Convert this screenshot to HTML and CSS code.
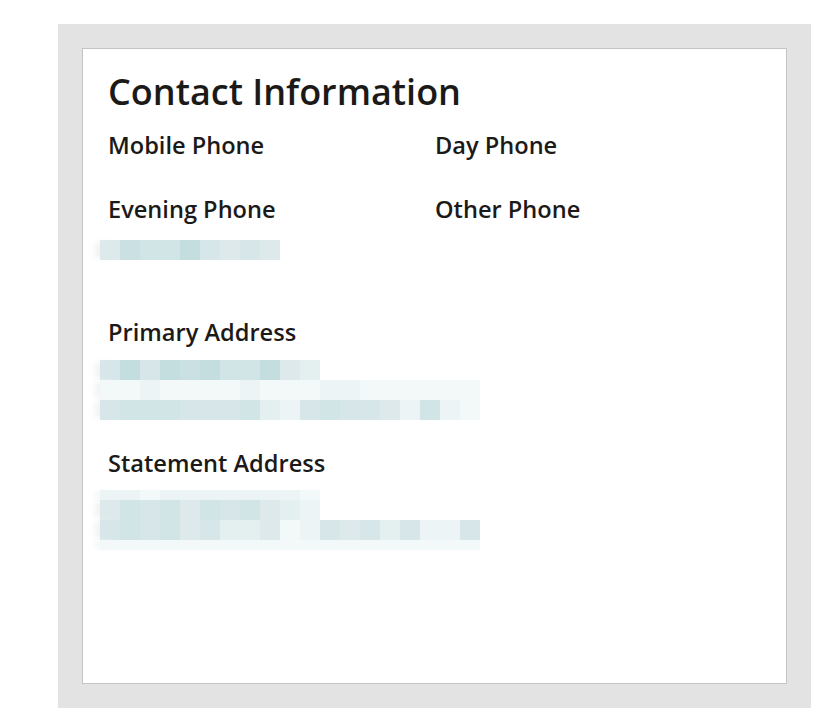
FILE: index.html
```html
<!DOCTYPE html>
<html lang="en">
<head>
    <meta charset="UTF-8">
    <meta name="viewport" content="width=device-width, initial-scale=1.0">
    <title>Contact Information</title>
    <link rel="stylesheet" href="styles.css">
</head>
<body>
    <div class="panel">
        <div class="card">
            <h2 class="card-title">Contact Information</h2>

            <div class="phone-grid">
                <div class="field">
                    <div class="field-label">Mobile Phone</div>
                </div>
                <div class="field">
                    <div class="field-label">Day Phone</div>
                </div>
                <div class="field">
                    <div class="field-label">Evening Phone</div>
                    <div class="blurred blurred-phone">
                        <div class="px-row">
                            <span class="px t5"></span><span class="px t2"></span><span class="px t3"></span><span class="px t3"></span><span class="px t1"></span><span class="px t4"></span><span class="px t5"></span><span class="px t4"></span><span class="px t5"></span>
                        </div>
                    </div>
                </div>
                <div class="field">
                    <div class="field-label">Other Phone</div>
                </div>
            </div>

            <div class="field address primary">
                <div class="field-label">Primary Address</div>
                <div class="blurred blurred-primary">
                    <div class="px-row">
                        <span class="px t4"></span><span class="px t1"></span><span class="px t4"></span><span class="px t1"></span><span class="px t2"></span><span class="px t1"></span><span class="px t3"></span><span class="px t3"></span><span class="px t1"></span><span class="px t5"></span><span class="px t6"></span>
                    </div>
                    <div class="px-row">
                        <span class="px t8"></span><span class="px t8"></span><span class="px t7"></span><span class="px t8"></span><span class="px t8"></span><span class="px t8"></span><span class="px t8"></span><span class="px t7"></span><span class="px t8"></span><span class="px t8"></span><span class="px t8"></span><span class="px t7"></span><span class="px t7"></span><span class="px t8"></span><span class="px t8"></span><span class="px t8"></span><span class="px t8"></span><span class="px t8"></span><span class="px t8"></span>
                    </div>
                    <div class="px-row">
                        <span class="px t4"></span><span class="px t3"></span><span class="px t3"></span><span class="px t3"></span><span class="px t4"></span><span class="px t4"></span><span class="px t4"></span><span class="px t3"></span><span class="px t6"></span><span class="px t7"></span><span class="px t4"></span><span class="px t3"></span><span class="px t4"></span><span class="px t4"></span><span class="px t5"></span><span class="px t7"></span><span class="px t3"></span><span class="px t7"></span><span class="px t8"></span>
                    </div>
                </div>
            </div>

            <div class="field address statement">
                <div class="field-label">Statement Address</div>
                <div class="blurred blurred-statement">
                    <div class="px-row half">
                        <span class="px t7"></span><span class="px t7"></span><span class="px t8"></span><span class="px t7"></span><span class="px t7"></span><span class="px t7"></span><span class="px t7"></span><span class="px t7"></span><span class="px t7"></span><span class="px t7"></span><span class="px t8"></span>
                    </div>
                    <div class="px-row">
                        <span class="px t5"></span><span class="px t3"></span><span class="px t4"></span><span class="px t3"></span><span class="px t5"></span><span class="px t3"></span><span class="px t4"></span><span class="px t3"></span><span class="px t5"></span><span class="px t6"></span><span class="px t7"></span>
                    </div>
                    <div class="px-row">
                        <span class="px t4"></span><span class="px t3"></span><span class="px t4"></span><span class="px t3"></span><span class="px t5"></span><span class="px t4"></span><span class="px t6"></span><span class="px t6"></span><span class="px t5"></span><span class="px t8"></span><span class="px t7"></span><span class="px t4"></span><span class="px t5"></span><span class="px t4"></span><span class="px t6"></span><span class="px t4"></span><span class="px t7"></span><span class="px t7"></span><span class="px t4"></span>
                    </div>
                    <div class="px-row half">
                        <span class="px t8"></span><span class="px t8"></span><span class="px t8"></span><span class="px t8"></span><span class="px t8"></span><span class="px t8"></span><span class="px t8"></span><span class="px t8"></span><span class="px t8"></span><span class="px t8"></span><span class="px t8"></span><span class="px t8"></span><span class="px t8"></span><span class="px t8"></span><span class="px t8"></span><span class="px t8"></span><span class="px t8"></span><span class="px t8"></span><span class="px t8"></span>
                    </div>
                </div>
            </div>
        </div>
    </div>
</body>
</html>
```

FILE: styles.css
```css
body {
    margin: 0;
    padding: 24px 20px 15px 58px;
    background-color: #fff;
    font-family: "Open Sans", "Liberation Sans", sans-serif;
    color: #1c1a18;
}
.panel {
    width: 753px;
    height: 684px;
    box-sizing: border-box;
    padding: 24px;
    background-color: #e3e3e3;
}
.card {
    height: 100%;
    box-sizing: border-box;
    padding: 21px 25px;
    background-color: #fff;
    border: 1px solid #c4c4c4;
}
.card-title {
    margin: 0 0 16px;
    font-size: 36px;
    font-weight: 600;
    line-height: 44px;
}
.phone-grid {
    display: grid;
    grid-template-columns: 327px 1fr;
    grid-template-rows: 64px auto;
}
.field-label {
    font-size: 23.6px;
    font-weight: 600;
    line-height: 30px;
}
.primary {
    margin-top: 57px;
}
.statement {
    margin-top: 28px;
}
.blurred {
    margin-left: -8px;
}
.blurred-phone {
    margin-top: 16px;
}
.blurred-primary {
    margin-top: 13px;
}
.blurred-statement {
    margin-top: 12px;
}
.px-row {
    display: flex;
    height: 20px;
}
.px-row.half {
    height: 10px;
}
.px {
    width: 20px;
    height: 100%;
}
.px-row .px:first-child {
    box-shadow: -7px 0 6px -2px #f1f3f3;
}
.t1 { background-color: #c4dddf; }
.t2 { background-color: #cbe0e3; }
.t3 { background-color: #d1e4e6; }
.t4 { background-color: #d7e7e9; }
.t5 { background-color: #dde9eb; }
.t6 { background-color: #e4eff0; }
.t7 { background-color: #ecf4f5; }
.t8 { background-color: #f3f8f8; }
```
